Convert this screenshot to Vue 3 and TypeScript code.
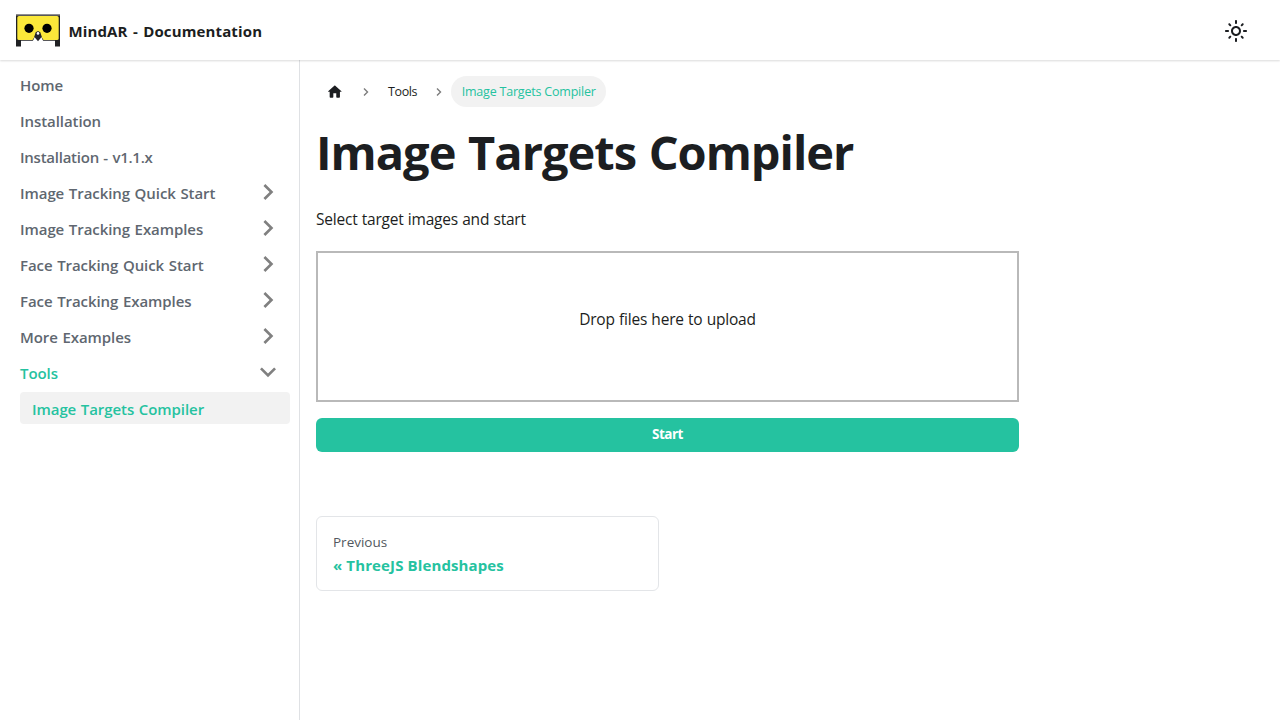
<script setup lang="ts">
interface NavItem {
  label: string
  kind: 'link' | 'closed' | 'open'
  tight?: boolean
}

const items: NavItem[] = [
  { label: 'Home', kind: 'link' },
  { label: 'Installation', kind: 'link' },
  { label: 'Installation - v1.1.x', kind: 'link', tight: true },
  { label: 'Image Tracking Quick Start', kind: 'closed' },
  { label: 'Image Tracking Examples', kind: 'closed' },
  { label: 'Face Tracking Quick Start', kind: 'closed' },
  { label: 'Face Tracking Examples', kind: 'closed' },
  { label: 'More Examples', kind: 'closed' },
  { label: 'Tools', kind: 'open' },
]
</script>

<template>
  <div class="page">
    <header class="navbar">
      <a class="brand">
        <svg class="logo" width="44" height="33" viewBox="0 0 44 33">
          <path d="M0 0.400H44V32.500H39V27H5V32.500H0Z" fill="#202124" />
          <path d="M5 26.800H39V33H5Z" fill="#fff" />
          <path d="M0 0.400H44V1.400H0Z" fill="#8d8d8d" />
          <path d="M3 2H41Q42.700 2 42.700 3.600V24.500Q42.700 26.100 41 26.100H27.500L25.500 23L22 19L18.500 23L16.500 26.100H3Q1.300 26.100 1.300 24.500V3.600Q1.300 2 3 2Z" fill="#fbe83a" />
          <path d="M16.700 27.300L19 22.500L22 17.500L25 22.500L27.300 27.300Z" fill="#fff" />
          <circle cx="13" cy="14.300" r="4.600" fill="#000" />
          <circle cx="31" cy="14.300" r="4.600" fill="#000" />
          <path d="M22 17L24.300 18.200L25.800 22.800L22 27.300L18.200 22.800L19.700 18.200Z" fill="#25262b" />
          <circle cx="22" cy="19.400" r="1.300" fill="#fff" />
        </svg>
        <b class="brand-name">MindAR - Documentation</b>
      </a>
      <button class="theme" aria-label="Switch theme">
        <svg viewBox="0 0 24 24" width="24" height="24"><path fill="currentColor" d="M12,9c1.650,0,3,1.350,3,3s-1.350,3-3,3s-3-1.350-3-3S10.350,9,12,9 M12,7c-2.760,0-5,2.240-5,5s2.240,5,5,5s5-2.240,5-5 S14.760,7,12,7L12,7z M2,13l2,0c0.550,0,1-0.450,1-1s-0.450-1-1-1l-2,0c-0.550,0-1,0.450-1,1S1.450,13,2,13z M20,13l2,0c0.550,0,1-0.450,1-1 s-0.450-1-1-1l-2,0c-0.550,0-1,0.450-1,1S19.450,13,20,13z M11,2v2c0,0.550,0.450,1,1,1s1-0.450,1-1V2c0-0.550-0.450-1-1-1S11,1.450,11,2z M11,20v2c0,0.550,0.450,1,1,1s1-0.450,1-1v-2c0-0.550-0.450-1-1-1C11.450,19,11,19.450,11,20z M5.990,4.580c-0.390-0.390-1.030-0.390-1.410,0 c-0.390,0.390-0.390,1.030,0,1.410l1.060,1.060c0.390,0.390,1.030,0.390,1.410,0s0.390-1.030,0-1.410L5.990,4.580z M18.360,16.950 c-0.390-0.390-1.030-0.390-1.410,0c-0.390,0.390-0.390,1.030,0,1.410l1.060,1.060c0.390,0.390,1.030,0.390,1.410,0c0.390-0.390,0.390-1.030,0-1.410 L18.360,16.950z M19.420,5.990c0.390-0.390,0.390-1.030,0-1.410c-0.390-0.390-1.030-0.390-1.410,0l-1.060,1.060c-0.390,0.390-0.390,1.030,0,1.410 s1.030,0.390,1.410,0L19.420,5.990z M7.050,18.360c0.390-0.390,0.390-1.030,0-1.410c-0.390-0.390-1.030-0.390-1.410,0l-1.060,1.060 c-0.390,0.390-0.390,1.030,0,1.410s1.030,0.390,1.410,0L7.050,18.360z" /></svg>
      </button>
    </header>

    <div class="body">
      <aside class="sidebar">
        <ul class="menu">
          <li v-for="item in items" :key="item.label" class="item" :class="[item.kind, { tight: item.tight }]">
            <span>{{ item.label }}</span>
            <svg v-if="item.kind !== 'link'" class="caret" viewBox="0 0 24 24" width="32" height="32"><path fill="currentColor" d="M7.410 15.410L12 10.830l4.590 4.580L18 14l-6-6-6 6z" /></svg>
          </li>
          <li class="item child"><span>Image Targets Compiler</span></li>
        </ul>
      </aside>

      <main class="main">
        <nav class="crumbs">
          <a class="crumb home"><svg viewBox="0 0 24 24" width="17.600" height="17.600"><path fill="currentColor" d="M10 19v-5h4v5c0 .55.45 1 1 1h3c.55 0 1-.45 1-1v-7h1.700c.46 0 .68-.57.33-.87L12.670 3.600c-.38-.34-.96-.34-1.340 0l-8.360 7.530c-.34.3-.13.87.33.87H5v7c0 .55.45 1 1 1h3c.55 0 1-.45 1-1z" /></svg></a>
          <svg class="sep" viewBox="0 0 8 10" width="8" height="10"><path d="M2 1.500L5.500 5L2 8.500" /></svg>
          <a class="crumb tools">Tools</a>
          <svg class="sep" viewBox="0 0 8 10" width="8" height="10"><path d="M2 1.500L5.500 5L2 8.500" /></svg>
          <span class="crumb active">Image Targets Compiler</span>
        </nav>
        <h1>Image Targets Compiler</h1>
        <p class="intro">Select target images and start</p>
        <div class="drop"><span>Drop files here to upload</span></div>
        <button class="start">Start</button>
        <a class="prev">
          <span class="prev-sub">Previous</span>
          <span class="prev-label">« ThreeJS Blendshapes</span>
        </a>
      </main>
    </div>
  </div>
</template>

<style>
body {
  margin: 0;
  background: #fff;
}
</style>

<style scoped>
.page {
  height: 720px;
  overflow: hidden;
  display: flex;
  flex-direction: column;
  box-sizing: border-box;
  font-family: "Segoe UI", "Open Sans", "Noto Sans", sans-serif;
  font-size: 15.500px;
  color: #1c1e21;
}
.navbar {
  height: 60px;
  flex: none;
  box-sizing: border-box;
  padding: 0 32px 0 16px;
  display: flex;
  align-items: center;
  justify-content: space-between;
  box-shadow: 0 1px 2px rgba(0, 0, 0, 0.15);
  position: relative;
  background: #fff;
}
.brand {
  display: flex;
  align-items: center;
  gap: 8.500px;
}
.logo {
  display: block;
  margin-top: 1px;
}
.brand-name {
  font-size: 15px;
  font-weight: 700;
  line-height: 24px;
  letter-spacing: 0.130px;
  word-spacing: 1.300px;
  margin-top: 2px;
}
.theme {
  border: 0;
  padding: 0;
  background: none;
  color: #1c1e21;
  display: flex;
  margin-top: 1px;
}
.body {
  flex: 1;
  display: flex;
}
.sidebar {
  width: 300px;
  box-sizing: border-box;
  flex: none;
  border-right: 1px solid #dfe1e4;
  padding: 8px 9.500px 8px 8px;
}
.menu {
  list-style: none;
  margin: 0;
  padding: 0;
  display: flex;
  flex-direction: column;
  gap: 4px;
}
.item {
  height: 32px;
  padding: 1px 6px 0 12px;
  box-sizing: border-box;
  display: flex;
  align-items: center;
  justify-content: space-between;
  color: #606770;
  font-size: 15px;
  font-weight: 600;
  line-height: 20px;
  letter-spacing: -0.070px;
  word-spacing: 0.800px;
}
.tight {
  letter-spacing: -0.250px;
}
.caret {
  color: #808080;
  transform: rotate(90deg);
  margin-top: -1px;
}
.open {
  color: #25c2a0;
}
.open .caret {
  transform: rotate(180deg);
}
.child {
  margin-left: 12px;
  border-radius: 4px;
  background: #f2f2f2;
  color: #25c2a0;
}
.main {
  width: 703px;
  padding: 16px 16px 0;
  display: flex;
  flex-direction: column;
}
.crumbs {
  display: flex;
  align-items: center;
  height: 31px;
  font-size: 12.500px;
  letter-spacing: -0.200px;
}
.crumb {
  height: 31px;
  display: flex;
  align-items: center;
}
.home {
  padding: 0 10px;
}
.sep {
  margin: 0 8px;
  fill: none;
  stroke: #7c7c7c;
  stroke-width: 1.400;
}
.tools {
  padding: 0 10px 0 10.500px;
  letter-spacing: -0.400px;
}
.active {
  padding: 0 10px 0 10.500px;
  border-radius: 16px;
  background: #f2f2f2;
  color: #25c2a0;
}
h1 {
  margin: 15px 0 0;
  font-size: 47px;
  line-height: 60px;
  font-weight: 700;
  letter-spacing: -1px;
  word-spacing: 1.400px;
  white-space: nowrap;
}
.intro {
  margin: 24px 0 0;
  line-height: 26px;
  letter-spacing: -0.220px;
  word-spacing: 0.500px;
}
.drop {
  margin-top: 19px;
  height: 151px;
  box-sizing: border-box;
  border: 2px solid #b9b9b9;
  padding-top: 53px;
  line-height: 26px;
  text-align: center;
  letter-spacing: -0.220px;
  word-spacing: 0.500px;
}
.start {
  margin-top: 15.500px;
  height: 34.500px;
  border: 0;
  border-radius: 6px;
  padding: 0 0 2px;
  background: #25c2a0;
  color: #fff;
  font: 700 13.500px "Segoe UI", "Open Sans", sans-serif;
  letter-spacing: -0.500px;
}
.prev {
  margin-top: 64px;
  width: 343px;
  height: 75px;
  box-sizing: border-box;
  border: 1px solid #e3e5e8;
  border-radius: 6px;
  padding: 15px 16px 0;
  display: flex;
  flex-direction: column;
}
.prev-sub {
  color: #525860;
  font-size: 13.500px;
  font-weight: 500;
  line-height: 21px;
}
.prev-label {
  color: #25c2a0;
  font-size: 15px;
  font-weight: 700;
  line-height: 25px;
  letter-spacing: 0.120px;
}
</style>
